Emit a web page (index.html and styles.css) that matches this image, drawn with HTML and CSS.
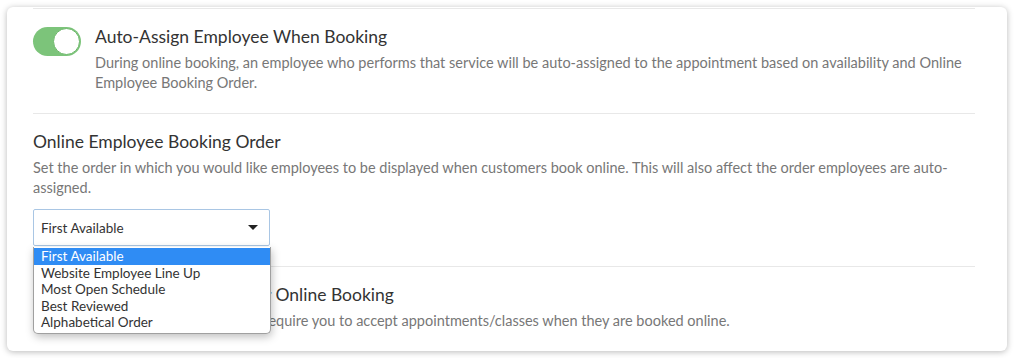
FILE: index.html
```html
<!DOCTYPE html>
<html lang="en">
<head>
    <meta charset="UTF-8">
    <title>Online Booking Settings</title>
    <link rel="stylesheet" href="styles.css">
</head>
<body>
    <div class="card">
        <div class="section toggle-row">
            <div class="toggle on"><span class="knob"></span></div>
            <div class="setting">
                <h3>Auto-Assign Employee When Booking</h3>
                <p>During online booking, an employee who performs that service will be auto-assigned to the appointment based on availability and Online Employee Booking Order.</p>
            </div>
        </div>

        <div class="section">
            <div class="setting">
                <h3>Online Employee Booking Order</h3>
                <p>Set the order in which you would like employees to be displayed when customers book online. This will also affect the order employees are auto-assigned.</p>
                <div class="select-wrap">
                    <div class="select">
                        <span>First Available</span>
                        <span class="caret"></span>
                    </div>
                    <ul class="options">
                        <li class="selected">First Available</li>
                        <li>Website Employee Line Up</li>
                        <li>Most Open Schedule</li>
                        <li>Best Reviewed</li>
                        <li>Alphabetical Order</li>
                    </ul>
                </div>
            </div>
        </div>

        <div class="section toggle-row">
            <div class="toggle on"><span class="knob"></span></div>
            <div class="setting">
                <h3>Requires Approvals For Online Booking</h3>
                <p>Turning on this option will require you to accept appointments/classes when they are booked online.</p>
            </div>
        </div>
    </div>
</body>
</html>
```

FILE: styles.css
```css
body {
    margin: 0;
    padding: 7px;
    background: #fff;
    font-family: Lato, "Liberation Sans", sans-serif;
}
.card {
    width: 1000px;
    height: 344px;
    box-sizing: border-box;
    padding: 1px 32px 0 26px;
    background: #fff;
    border-radius: 6px;
    box-shadow: 0 1px 6px rgba(0,0,0,0.28);
    overflow: hidden;
}
.section {
    border-top: 1px solid #e8e8e8;
    padding: 17px 0 20px;
}
.toggle-row {
    display: flex;
    gap: 14px;
}
.toggle {
    flex: none;
    width: 48px;
    height: 29px;
    margin-top: 1px;
    border-radius: 15px;
    background: #7cc47a;
    position: relative;
}
.knob {
    position: absolute;
    right: 1px;
    top: 1px;
    width: 25px;
    height: 25px;
    border-radius: 50%;
    background: #fff;
    border: 1px solid #6cb86a;
}
.setting h3 {
    margin: 0 0 5px;
    font-size: 17.5px;
    line-height: 22px;
    font-weight: 400;
    color: #333;
}
.setting p {
    margin: 0;
    font-size: 14.5px;
    line-height: 20px;
    color: #777;
}
.select-wrap {
    position: relative;
    width: 237px;
    margin-top: 11px;
}
.select {
    height: 37px;
    box-sizing: border-box;
    display: flex;
    align-items: center;
    justify-content: space-between;
    padding: 0 11px 0 7px;
    border: 1px solid #a9c6e4;
    border-radius: 2px;
    font-size: 13.5px;
    color: #333;
}
.caret {
    width: 0;
    height: 0;
    border-left: 5px solid transparent;
    border-right: 5px solid transparent;
    border-top: 5px solid #222;
}
.options {
    position: absolute;
    top: 38px;
    left: 0;
    width: 236px;
    margin: 0;
    padding: 1px 0 2px;
    list-style: none;
    background: #fff;
    border: 1px solid #a0a0a0;
    border-top: none;
    border-radius: 0 0 5px 5px;
    box-shadow: 1px 3px 8px rgba(0,0,0,0.25);
    font-size: 13.5px;
    color: #333;
    z-index: 2;
}
.options li {
    height: 16.5px;
    line-height: 16.5px;
    padding-left: 7px;
}
.options .selected {
    background: #2f8cf4;
    color: #fff;
}
```
